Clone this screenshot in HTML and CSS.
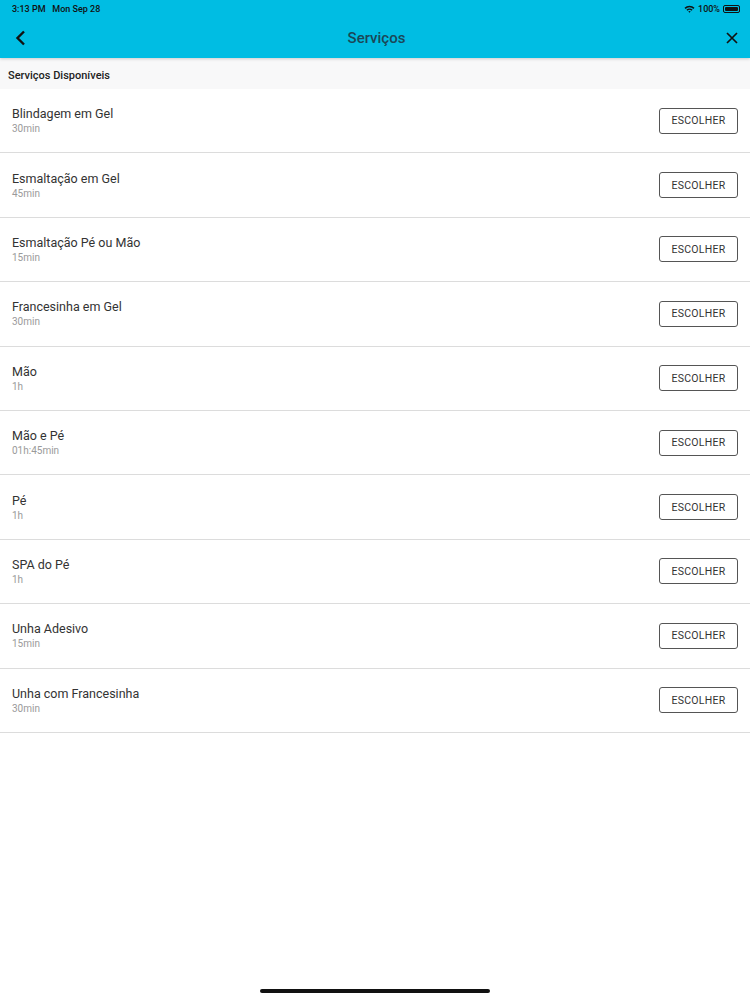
FILE: index.html
```html
<!DOCTYPE html>
<html lang="pt">

<head>
  <meta charset="utf-8" />
  <title>Serviços</title>
  <link rel="stylesheet" href="styles.css">
</head>

<body>
  <div class="top">
    <div class="status">
      <span class="clock">3:13 PM&nbsp;&nbsp; Mon Sep 28</span>
      <span class="sys">
        <svg width="11" height="8" viewBox="0 0 11 8">
          <path d="M0.5 2.8 A7 7 0 0 1 10.5 2.8 L9.4 3.9 A5.4 5.4 0 0 0 1.6 3.9 Z" fill="#111" />
          <path d="M2.4 4.7 A4.4 4.4 0 0 1 8.6 4.7 L7.5 5.8 A2.8 2.8 0 0 0 3.5 5.8 Z" fill="#111" />
          <path d="M4.3 6.6 A1.7 1.7 0 0 1 6.7 6.6 L5.5 7.8 Z" fill="#111" />
        </svg>
        <span class="pct">100%</span>
        <span class="battery"><span class="cell"></span></span>
      </span>
    </div>
    <div class="navbar">
      <svg class="back" width="12" height="16" viewBox="0 0 12 16">
        <path d="M9 1.5 L2.5 8 L9 14.5" fill="none" stroke="#111" stroke-width="2.4" />
      </svg>
      <span class="title">Serviços</span>
      <svg class="close" width="12" height="12" viewBox="0 0 12 12">
        <path d="M1 1 L11 11 M11 1 L1 11" fill="none" stroke="#111" stroke-width="1.7" />
      </svg>
    </div>
  </div>

  <div class="section">Serviços Disponíveis</div>

  <ul class="list">
    <li class="row">
      <div><div class="name">Blindagem em Gel</div><div class="time">30min</div></div>
      <button class="pick">ESCOLHER</button>
    </li>
    <li class="row">
      <div><div class="name">Esmaltação em Gel</div><div class="time">45min</div></div>
      <button class="pick">ESCOLHER</button>
    </li>
    <li class="row">
      <div><div class="name">Esmaltação Pé ou Mão</div><div class="time">15min</div></div>
      <button class="pick">ESCOLHER</button>
    </li>
    <li class="row">
      <div><div class="name">Francesinha em Gel</div><div class="time">30min</div></div>
      <button class="pick">ESCOLHER</button>
    </li>
    <li class="row">
      <div><div class="name">Mão</div><div class="time">1h</div></div>
      <button class="pick">ESCOLHER</button>
    </li>
    <li class="row">
      <div><div class="name">Mão e Pé</div><div class="time">01h:45min</div></div>
      <button class="pick">ESCOLHER</button>
    </li>
    <li class="row">
      <div><div class="name">Pé</div><div class="time">1h</div></div>
      <button class="pick">ESCOLHER</button>
    </li>
    <li class="row">
      <div><div class="name">SPA do Pé</div><div class="time">1h</div></div>
      <button class="pick">ESCOLHER</button>
    </li>
    <li class="row">
      <div><div class="name">Unha Adesivo</div><div class="time">15min</div></div>
      <button class="pick">ESCOLHER</button>
    </li>
    <li class="row">
      <div><div class="name">Unha com Francesinha</div><div class="time">30min</div></div>
      <button class="pick">ESCOLHER</button>
    </li>
  </ul>

  <div class="home-bar"></div>
</body>

</html>
```

FILE: styles.css
```css
html,
body {
  margin: 0;
  height: 1000px;
  background: #fff;
  font-family: Roboto, "Liberation Sans", sans-serif;
  color: #333;
  overflow: hidden;
}

.top {
  background: #00bde3;
  height: 58px;
  box-shadow: 0 1px 3px rgba(0, 0, 0, 0.18);
  position: relative;
  z-index: 1;
}

.status {
  height: 18px;
  display: flex;
  justify-content: space-between;
  align-items: center;
  padding: 0 10px 0 12px;
  font-size: 9px;
  font-weight: 500;
  color: #111;
}

.sys {
  display: flex;
  align-items: center;
  gap: 3px;
}

.battery {
  display: flex;
  align-items: center;
  width: 17px;
  height: 8px;
  border: 1px solid #111;
  border-radius: 2px;
  padding: 1px;
  box-sizing: border-box;
}

.cell {
  flex: 1;
  height: 100%;
  background: #111;
  border-radius: 1px;
}

.navbar {
  height: 40px;
  display: flex;
  align-items: center;
  justify-content: space-between;
  padding: 0 12px 0 15px;
}

.title {
  font-size: 15px;
  font-weight: 500;
  color: #1b4757;
}

.section {
  background: #f8f8f9;
  height: 26px;
  line-height: 26px;
  padding: 5px 0 0 8px;
  font-size: 11px;
  font-weight: 500;
  color: #222;
}

.list {
  list-style: none;
  margin: 0;
  padding: 0;
}

.row {
  height: 63.4px;
  border-bottom: 1px solid #dcdcdc;
  display: flex;
  align-items: center;
  justify-content: space-between;
  padding: 0 12px;
}

.name {
  font-size: 12.5px;
  color: #333;
  line-height: 16px;
}

.time {
  font-size: 10px;
  color: #9a9a9a;
  line-height: 13px;
}

.pick {
  width: 79px;
  height: 26px;
  border: 1px solid #555;
  border-radius: 3px;
  background: #fff;
  font-family: Roboto, "Liberation Sans", sans-serif;
  font-size: 10.5px;
  letter-spacing: 0.3px;
  color: #333;
  padding: 0;
}

.home-bar {
  position: absolute;
  left: 260px;
  top: 989px;
  width: 230px;
  height: 4px;
  border-radius: 2px;
  background: #111;
}
```
